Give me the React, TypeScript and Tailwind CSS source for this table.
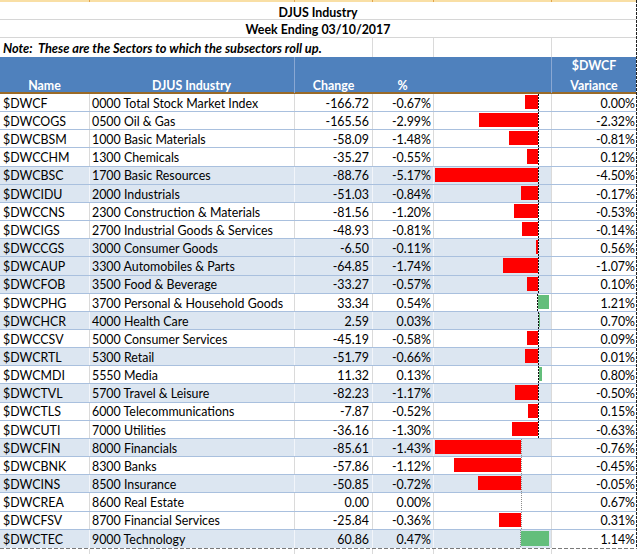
import React from 'react'

type Row = { t: string; n: string; c: string; p: string; v: string; s?: boolean }

// sectors, bars scaled as one group
const SECTORS: Row[] = [
  { t: '$DWCF',   n: '0000 Total Stock Market Index',     c: '-166.72', p: '-0.67%', v: '0.00%' },
  { t: '$DWCOGS', n: '0500 Oil & Gas',                    c: '-165.56', p: '-2.99%', v: '-2.32%' },
  { t: '$DWCBSM', n: '1000 Basic Materials',              c: '-58.09',  p: '-1.48%', v: '-0.81%' },
  { t: '$DWCCHM', n: '1300 Chemicals',                    c: '-35.27',  p: '-0.55%', v: '0.12%' },
  { t: '$DWCBSC', n: '1700 Basic Resources',              c: '-88.76',  p: '-5.17%', v: '-4.50%', s: true },
  { t: '$DWCIDU', n: '2000 Industrials',                  c: '-51.03',  p: '-0.84%', v: '-0.17%', s: true },
  { t: '$DWCCNS', n: '2300 Construction & Materials',     c: '-81.56',  p: '-1.20%', v: '-0.53%' },
  { t: '$DWCIGS', n: '2700 Industrial Goods & Services',  c: '-48.93',  p: '-0.81%', v: '-0.14%' },
  { t: '$DWCCGS', n: '3000 Consumer Goods',               c: '-6.50',   p: '-0.11%', v: '0.56%', s: true },
  { t: '$DWCAUP', n: '3300 Automobiles & Parts',          c: '-64.85',  p: '-1.74%', v: '-1.07%', s: true },
  { t: '$DWCFOB', n: '3500 Food & Beverage',              c: '-33.27',  p: '-0.57%', v: '0.10%', s: true },
  { t: '$DWCPHG', n: '3700 Personal & Household Goods',   c: '33.34',   p: '0.54%',  v: '1.21%' },
  { t: '$DWCHCR', n: '4000 Health Care',                  c: '2.59',    p: '0.03%',  v: '0.70%', s: true },
  { t: '$DWCCSV', n: '5000 Consumer Services',            c: '-45.19',  p: '-0.58%', v: '0.09%' },
  { t: '$DWCRTL', n: '5300 Retail',                       c: '-51.79',  p: '-0.66%', v: '0.01%', s: true },
  { t: '$DWCMDI', n: '5550 Media',                        c: '11.32',   p: '0.13%',  v: '0.80%' },
  { t: '$DWCTVL', n: '5700 Travel & Leisure',             c: '-82.23',  p: '-1.17%', v: '-0.50%', s: true },
  { t: '$DWCTLS', n: '6000 Telecommunications',           c: '-7.87',   p: '-0.52%', v: '0.15%' },
  { t: '$DWCUTI', n: '7000 Utilities',                    c: '-36.16',  p: '-1.30%', v: '-0.63%' },
]

// financials get their own bar scale
const FINANCIALS: Row[] = [
  { t: '$DWCFIN', n: '8000 Financials',                   c: '-85.61',  p: '-1.43%', v: '-0.76%', s: true },
  { t: '$DWCBNK', n: '8300 Banks',                        c: '-57.86',  p: '-1.12%', v: '-0.45%' },
  { t: '$DWCINS', n: '8500 Insurance',                    c: '-50.85',  p: '-0.72%', v: '-0.05%', s: true },
  { t: '$DWCREA', n: '8600 Real Estate',                  c: '0.00',    p: '0.00%',  v: '0.67%' },
  { t: '$DWCFSV', n: '8700 Financial Services',           c: '-25.84',  p: '-0.36%', v: '0.31%' },
  { t: '$DWCTEC', n: '9000 Technology',                   c: '60.86',   p: '0.47%',  v: '1.14%', s: true },
]

const BAR_W = 114

function scaleOf(rows: Row[]) {
  const vals = rows.map(r => parseFloat(r.p))
  return { neg: Math.max(0, ...vals.map(v => -v)), pos: Math.max(0, ...vals) }
}

function DataRow({ r, scale, dark, last }: { r: Row; scale: { neg: number; pos: number }; dark: boolean; last?: boolean }) {
  const val   = parseFloat(r.p)
  const total = scale.neg + scale.pos
  const axis  = (scale.neg / total) * BAR_W
  const len   = (Math.abs(val) / total) * BAR_W
  const fill  = r.s ? 'bg-[#dce6f1]' : 'bg-white'
  const line  = r.s ? 'border-[#f2f5fa]' : 'border-[#dadada]'

  return (
    <div className={`flex h-[18.16px] ${last ? '' : 'border-b border-[#a9c0de]'}`}>
      <div className={`w-[89px] flex items-center pt-[3px] pl-[3px] ${fill}`}>{r.t}</div>
      <div className={`w-[205px] flex items-center pt-[3px] pl-[2px] border-l ${line} ${fill} whitespace-nowrap`}>{r.n}</div>
      <div className={`w-[78px] flex items-center justify-end pt-[3px] pr-[3px] border-l ${line} ${fill}`}>{r.c}</div>
      <div className={`w-[61px] flex items-center justify-end pt-[3px] pr-[2px] border-l ${line} ${fill}`}>{r.p}</div>
      <div className={`w-[118px] flex pl-[1px] pr-[2px] border-l ${line} ${fill}`}>
        <div className="flex justify-end pt-[1px] pb-[2px]" style={{ width: axis }}>
          {val < 0 && <div className="bg-[#ff0000]" style={{ width: len }} />}
        </div>
        <div className={
          dark
            ? 'w-px bg-[repeating-linear-gradient(to_bottom,#111_0px,#111_2px,transparent_2px,transparent_3px)]'
            : 'w-px bg-[repeating-linear-gradient(to_bottom,#8c8c8c_0px,#8c8c8c_1px,transparent_1px,transparent_2px)]'
        } />
        <div className="flex-1 flex pt-[1px] pb-[2px]">
          {val > 0 && <div className="bg-[#63be7b]" style={{ width: len }} />}
        </div>
      </div>
      <div className="w-[85px] flex items-center justify-end pt-[3px] pr-[1px] border-l border-[#dadada] bg-white">{r.v}</div>
    </div>
  )
}

export default function App() {
  const s1 = scaleOf(SECTORS)
  const s2 = scaleOf(FINANCIALS)

  return (
    <div className="w-[640px] h-[554px] overflow-hidden bg-white text-black text-[12.4px] leading-none font-['Lato','Noto_Sans',sans-serif]">
      <div className="flex">
        <div className="w-[636px]">
          {/* column header remnant */}
          <div className="flex h-[2px] bg-[#f9dfa5]">
            <div className="w-[89px]" />
            <div className="w-[205px] border-l border-[#e2a44a]" />
            <div className="w-[78px] border-l border-[#e2a44a]" />
            <div className="w-[61px] border-l border-[#e2a44a]" />
            <div className="w-[118px] border-l border-[#e2a44a]" />
            <div className="w-[85px] border-l border-[#e2a44a]" />
          </div>

          {/* titles */}
          <div className="h-[18.2px] flex items-center justify-center pt-[5px] border-b border-[#d6d6d6] font-bold">
            DJUS Industry
          </div>
          <div className="h-[18.2px] flex items-center justify-center pt-[3px] border-b border-[#d6d6d6] font-bold">
            Week Ending 03/10/2017
          </div>
          <div className="flex h-[18.2px] font-bold italic text-[12.8px]">
            <div className="w-[372px] flex items-center pt-[1px] pl-[3px] whitespace-pre">
              Note:  These are the Sectors to which the subsectors roll up.
            </div>
            <div className="w-[61px] border-l border-[#dadada]" />
            <div className="w-[118px] border-l border-[#dadada]" />
            <div className="w-[85px] border-l border-[#dadada]" />
          </div>

          {/* header */}
          <div className="flex h-[37.4px] bg-[#4f81bd] border-b-2 border-[#9a6a27] text-white font-bold leading-[14px]">
            <div className="w-[89px] flex items-end justify-center mb-[-1px]">Name</div>
            <div className="w-[205px] flex items-end justify-center mb-[-1px]">DJUS Industry</div>
            <div className="w-[78px] flex items-end justify-center mb-[-1px] border-l border-[#8aa8d3]">Change</div>
            <div className="w-[61px] flex items-end justify-center mb-[-1px]">%</div>
            <div className="w-[118px]" />
            <div className="w-[85px] flex flex-col items-center justify-end gap-[6px] mb-[-1px] border-l border-[#8aa8d3]">
              <span>$DWCF</span>
              <span>Variance</span>
            </div>
          </div>

          {SECTORS.map(r => <DataRow key={r.t} r={r} scale={s1} dark />)}
          {FINANCIALS.map((r, i) => (
            <DataRow key={r.t} r={r} scale={s2} dark={false} last={i === FINANCIALS.length - 1} />
          ))}
        </div>
        <div className="w-px bg-[repeating-linear-gradient(to_bottom,#222_0px,#222_3px,transparent_3px,transparent_4px)]" />
        <div className="flex-1" />
      </div>

      <div className="w-[637px] h-px bg-[repeating-linear-gradient(to_right,#7a7a7a_0px,#7a7a7a_4px,transparent_4px,transparent_6px)]" />
      <div className="flex h-[6px]">
        <div className="w-[89px]" />
        <div className="w-[205px] border-l border-[#dadada]" />
        <div className="w-[78px] border-l border-[#dadada]" />
        <div className="w-[61px] border-l border-[#dadada]" />
        <div className="w-[118px] border-l border-[#dadada]" />
        <div className="w-[85px] border-l border-[#dadada]" />
      </div>
    </div>
  )
}
